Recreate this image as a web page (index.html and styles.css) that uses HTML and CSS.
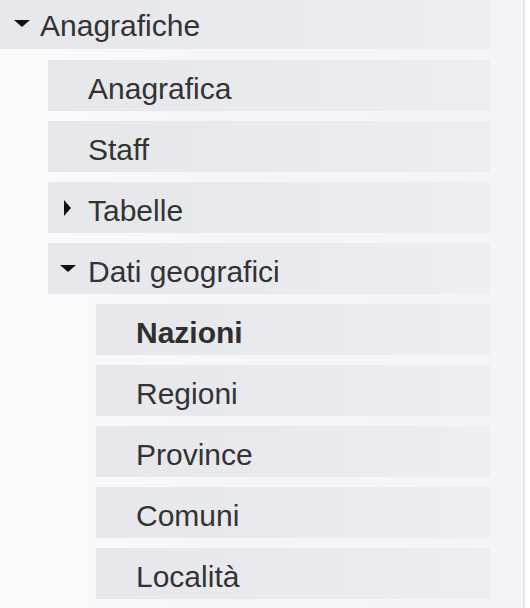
FILE: index.html
```html
<!DOCTYPE html>
<html lang="it">
<head>
<meta charset="utf-8">
<title>Anagrafiche</title>
<link rel="stylesheet" href="styles.css">
</head>
<body>
<nav class="panel">
  <ul class="tree">
    <li class="node">
      <div class="row row-top">
        <span class="caret caret-top"><svg width="16" height="8" viewBox="0 0 16 8"><polygon points="0,0 16,0 8,7" fill="#111"/></svg></span>
        <span class="label label-top">Anagrafiche</span>
      </div>
      <ul class="children children-first">
        <li><div class="row leaf"><span class="label">Anagrafica</span></div></li>
        <li><div class="row leaf"><span class="label">Staff</span></div></li>
        <li>
          <div class="row">
            <span class="caret caret-right"><svg width="8" height="16" viewBox="0 0 8 16"><polygon points="0,0 7,8 0,16" fill="#111"/></svg></span>
            <span class="label">Tabelle</span>
          </div>
        </li>
        <li>
          <div class="row">
            <span class="caret"><svg width="16" height="8" viewBox="0 0 16 8"><polygon points="0,0 16,0 8,7" fill="#111"/></svg></span>
            <span class="label">Dati geografici</span>
          </div>
          <ul class="children">
            <li><div class="row leaf"><span class="label active">Nazioni</span></div></li>
            <li><div class="row leaf"><span class="label">Regioni</span></div></li>
            <li><div class="row leaf"><span class="label">Province</span></div></li>
            <li><div class="row leaf"><span class="label">Comuni</span></div></li>
            <li><div class="row leaf"><span class="label">Località</span></div></li>
          </ul>
        </li>
      </ul>
    </li>
  </ul>
</nav>
</body>
</html>
```

FILE: styles.css
```css
html, body {
  margin: 0;
  padding: 0;
  background: #ffffff;
  height: 100%;
}

body {
  font-family: "Liberation Sans", Arial, sans-serif;
  color: #333333;
}

.panel {
  width: 490px;
  min-height: 608px;
  padding-right: 33px;
  border-right: 2px solid #e4e5e8;
  background: linear-gradient(to right, #fbfbfc 0%, #f5f6f9 40%, #f2f4f7 100%);
}

.tree,
.children {
  list-style: none;
  margin: 0;
  padding: 0;
  display: flex;
  flex-direction: column;
  gap: 10px;
}

.children {
  padding-left: 48px;
  margin-top: 10px;
}

.children-first {
  margin-top: 11px;
}

.row {
  display: flex;
  align-items: center;
  height: 51px;
  padding-left: 12px;
  background: linear-gradient(to right, #e6e7eb 0%, #e9eaee 50%, #eceef2 100%);
  box-sizing: border-box;
}

.row.leaf {
  padding-left: 40px;
}

.row-top {
  height: 49px;
  padding-left: 14px;
}

.caret {
  width: 28px;
  height: 16px;
  display: flex;
  align-items: center;
  justify-content: flex-start;
  flex: none;
}

.caret-top {
  width: 26px;
  margin-top: -2px;
}

.caret-right {
  padding-left: 4px;
  width: 24px;
}

.caret svg {
  display: block;
}

.label {
  font-size: 30px;
  line-height: 45px;
  padding-top: 6px;
  white-space: nowrap;
}

.label-top {
  line-height: 46px;
  padding-top: 3px;
}

.label.active {
  font-weight: bold;
  color: #2f2f2f;
}
```
